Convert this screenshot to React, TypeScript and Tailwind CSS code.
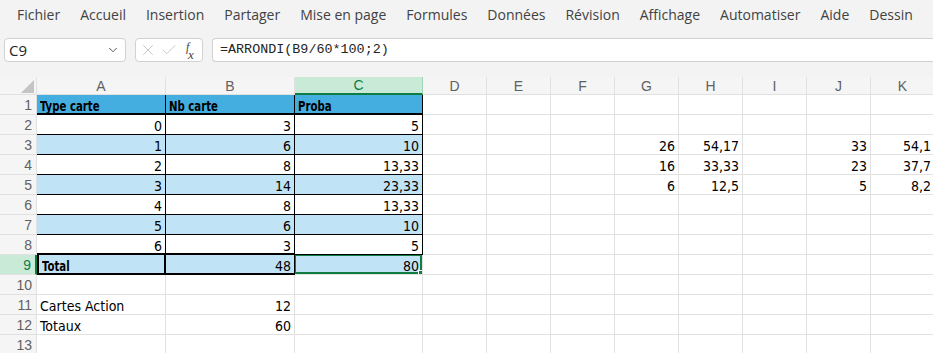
import React from 'react';
import { ChevronDown, X, Check } from 'lucide-react';

const MENU = ['Fichier', 'Accueil', 'Insertion', 'Partager', 'Mise en page', 'Formules', 'Données', 'Révision', 'Affichage', 'Automatiser', 'Aide', 'Dessin'];
const COLS = ['A', 'B', 'C', 'D', 'E', 'F', 'G', 'H', 'I', 'J', 'K'];

type Row = { cells: Record<number, string>; bg?: 'head' | 'light' | 'white' };

const ROWS: Row[] = [
  { cells: { 0: 'Type carte', 1: 'Nb carte', 2: 'Proba' }, bg: 'head' },
  { cells: { 0: '0', 1: '3', 2: '5' }, bg: 'white' },
  { cells: { 0: '1', 1: '6', 2: '10', 6: '26', 7: '54,17', 9: '33', 10: '54,1' }, bg: 'light' },
  { cells: { 0: '2', 1: '8', 2: '13,33', 6: '16', 7: '33,33', 9: '23', 10: '37,7' }, bg: 'white' },
  { cells: { 0: '3', 1: '14', 2: '23,33', 6: '6', 7: '12,5', 9: '5', 10: '8,2' }, bg: 'light' },
  { cells: { 0: '4', 1: '8', 2: '13,33' }, bg: 'white' },
  { cells: { 0: '5', 1: '6', 2: '10' }, bg: 'light' },
  { cells: { 0: '6', 1: '3', 2: '5' }, bg: 'white' },
  { cells: { 0: 'Total', 1: '48', 2: '80' }, bg: 'light' },
  { cells: {} },
  { cells: { 0: 'Cartes Action', 1: '12' } },
  { cells: { 0: 'Totaux', 1: '60' } },
  { cells: {} },
];

const isNum = (s: string) => /^[0-9,]+$/.test(s);

function cellClass(r: number, c: number): string {
  const row = ROWS[r];
  const inTable = c <= 2 && r <= 8;
  let cls = 'relative h-[20px] px-[3px] leading-[22px] overflow-hidden whitespace-nowrap';
  if (!inTable) return cls + ' border-r border-b border-[#e1e1e1] bg-white';

  if (row.bg === 'head') cls += ' bg-[#45aee0]';
  else if (row.bg === 'light') cls += ' bg-[#c0e4f5]';
  else cls += ' bg-white';

  if (r === 0) cls += ' border-r border-r-black border-b-2 border-b-black';
  else if (r === 7) {
    cls += c === 2 ? ' border-r border-r-black border-b border-b-black' : ' border-r border-r-black border-b-2 border-b-black';
  } else if (r === 8) {
    if (c === 0) cls += ' border-l-2 border-l-black border-r-2 border-r-black border-b-2 border-b-black';
    else if (c === 1) cls += ' border-r border-r-black border-b-2 border-b-black';
    else cls += ' border-r border-r-[#e1e1e1] border-b border-b-[#e1e1e1]';
  } else cls += ' border-r border-r-black border-b border-b-black';
  return cls;
}

function Grid() {
  return (
    <div
      className="grid grid-cols-[37px_129px_129px_128px_64px_64px_64px_64px_64px_64px_64px_64px] text-[14px] text-black"
      style={{ fontFamily: '"Liberation Sans Narrow", "DejaVu Sans Condensed", Roboto, sans-serif' }}
    >
      {/* column headers */}
      <div className="relative h-[18px] bg-[#f5f5f5] border-r border-b border-[#e1e1e1]">
        <div className="absolute right-[2px] bottom-[1px] w-0 h-0 border-l-[13px] border-l-transparent border-b-[13px] border-b-[#c4c4c4]" />
      </div>
      {COLS.map((l) =>
        l === 'C' ? (
          <div key={l} className="h-[18px] bg-[#caead8] border-r border-r-[#9fd4b6] border-b-2 border-b-[#107c41] text-center text-[#107c41] text-[14px] leading-[17px] font-['Liberation_Sans']">
            {l}
          </div>
        ) : (
          <div key={l} className="h-[18px] bg-[#f5f5f5] border-r border-b border-[#e1e1e1] text-center text-[#616161] text-[14px] leading-[18px] font-['Liberation_Sans']">
            {l}
          </div>
        )
      )}
      {ROWS.map((row, r) => (
        <React.Fragment key={r}>
          {r === 8 ? (
            <div className="h-[20px] bg-[#caead8] border-r-2 border-r-[#107c41] border-b border-b-[#e1e1e1] text-right pr-[4px] text-[#107c41] text-[14px] leading-[21px] font-['Liberation_Sans']">
              {r + 1}
            </div>
          ) : (
            <div className="h-[20px] bg-[#f5f5f5] border-r border-b border-[#e1e1e1] text-right pr-[4px] text-[#616161] text-[14px] leading-[21px] font-['Liberation_Sans']">
              {r + 1}
            </div>
          )}
          {COLS.map((_, c) => {
            const v = row.cells[c];
            const num = v !== undefined && isNum(v);
            const bold = (r === 0 || r === 8) && c <= 2 && !num;
            return (
              <div key={c} className={cellClass(r, c) + (num ? ' text-right' : ' text-left')}>
                {bold ? (
                  <span className="inline-block origin-left scale-x-[0.78] font-bold text-[14.5px]">{v}</span>
                ) : (
                  v
                )}
                {r === 8 && c === 2 && (
                  <div className="absolute -left-[1px] -top-[1px] right-0 bottom-0 border-2 border-[#107c41]">
                    <div className="absolute -right-[4px] -bottom-[4px] w-[6px] h-[6px] bg-[#107c41] border border-white" />
                  </div>
                )}
              </div>
            );
          })}
        </React.Fragment>
      ))}
    </div>
  );
}

export default function App() {
  return (
    <div className="w-[933px] h-[353px] overflow-hidden bg-[#f3f3f3]">
      <div className="h-[38px] flex items-start pt-[4px] pl-[7px] text-[14px] text-[#424242]" style={{ fontFamily: '"Open Sans", "Noto Sans", sans-serif' }}>
        {MENU.map((m) => (
          <div key={m} className="px-[10px] h-[22px] leading-[22px] whitespace-nowrap">
            {m}
          </div>
        ))}
      </div>
      <div className="h-[24px] flex items-stretch pl-[4px] gap-[9px]">
        <div className="w-[122px] bg-white border border-[#d1d1d1] rounded-[4px] flex items-center justify-between pl-[4px] pr-[5px]">
          <span className="text-[15px] text-[#242424]" style={{ fontFamily: '"Open Sans", "Noto Sans", sans-serif' }}>C9</span>
          <ChevronDown className="w-[14px] h-[14px] text-[#424242]" strokeWidth={1.5} />
        </div>
        <div className="w-[68px] bg-white border border-[#d1d1d1] rounded-[4px] flex items-center pl-[3px] gap-[3px]">
          <X className="w-[18px] h-[18px] text-[#c4c4c4]" strokeWidth={1.2} />
          <Check className="w-[18px] h-[18px] text-[#c4c4c4]" strokeWidth={1.2} />
          <span className="relative w-[16px] h-[18px] text-[#424242] italic" style={{ fontFamily: '"Liberation Serif", serif' }}>
            <span className="absolute left-[5px] -top-[3px] text-[12px]">f</span>
            <span className="absolute left-[7px] top-[4px] text-[13px]">x</span>
          </span>
        </div>
        <div className="flex-1 bg-white border border-[#d1d1d1] border-r-0 rounded-l-[4px] flex items-center pl-[7px] text-[13.4px] text-[#242424]" style={{ fontFamily: '"Liberation Mono", monospace' }}>
          =ARRONDI(B9/60*100;2)
        </div>
      </div>
      <div className="h-[15px]" />
      <Grid />
    </div>
  );
}
